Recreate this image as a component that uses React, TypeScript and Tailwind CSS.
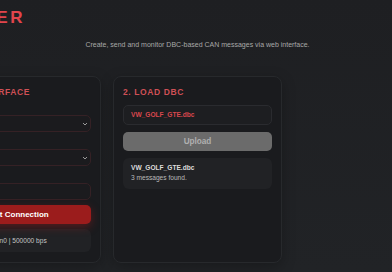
import React from "react";

function Chevron() {
  return (
    <svg width="6" height="4" viewBox="0 0 6 4" className="mr-[1px]">
      <path d="M1 1 L3 3 L5 1" fill="none" stroke="#9a9a9a" strokeWidth="1" />
    </svg>
  );
}

function Field({ children }: { children?: React.ReactNode }) {
  return (
    <div className="mt-[3px]">
      <div className="h-[10px] mb-[4px]" />
      <div className="h-[17px] rounded-[5px] border border-[#352125] bg-[#1b1b1e] flex items-center justify-end pr-[1px]">
        {children}
      </div>
    </div>
  );
}

export default function App() {
  return (
    <div className="w-[392px] h-[272px] overflow-hidden bg-gradient-to-b from-[#1e1f22] to-[#212326] font-['Liberation_Sans',Arial,sans-serif]">
      <div className="pt-[8px] h-[28px]">
        <div className="flex justify-end w-[25px] h-[20px]">
          <h1 className="shrink-0 whitespace-nowrap text-[17px] leading-[20px] font-bold tracking-[2.5px] text-[#e2454c]">
            DBC CAN SENDER
          </h1>
        </div>
      </div>
      <p className="mt-[12px] h-[10px] text-center pl-[3px] text-[7px] leading-[10px] text-[#a8a8a8]">
        Create, send and monitor DBC-based CAN messages via web interface.
      </p>
      <div className="mt-[26px] ml-[-68px] flex gap-[12px]">
        <div className="w-[169px] h-[187px] shrink-0 rounded-[8px] border border-[#27292c] bg-[#1a1b1e] p-[9px] shadow-[0_4px_14px_rgba(0,0,0,0.25)]">
          <h2 className="h-[12px] leading-[12px] text-[8.5px] font-bold tracking-[0.6px] text-[#cf5056] whitespace-nowrap">
            1. CAN INTERFACE
          </h2>
          <Field>
            <Chevron />
          </Field>
          <Field>
            <Chevron />
          </Field>
          <Field />
          <button className="mt-[5px] w-full h-[19px] rounded-[5px] bg-[#9b1c1c] text-white text-[8px] font-bold leading-[19px] shadow-[0_3px_10px_rgba(200,30,30,0.35)]">
            Start Connection
          </button>
          <div className="mt-[5px] h-[23px] rounded-[6px] bg-[#212225] flex items-center pl-[6px] text-[6.6px] text-[#c4c4c4] whitespace-nowrap">
            <span className="w-[5px] h-[5px] rounded-full bg-[#3a3a3a] mr-[4px]" />
            Connected: can0 | 500000 bps
          </div>
        </div>
        <div className="w-[169px] h-[187px] shrink-0 rounded-[8px] border border-[#27292c] bg-[#1a1b1e] p-[9px] shadow-[0_4px_14px_rgba(0,0,0,0.25)]">
          <h2 className="h-[12px] leading-[12px] text-[8.5px] font-bold tracking-[0.6px] text-[#cf5056] whitespace-nowrap">
            2. LOAD DBC
          </h2>
          <div className="mt-[7px] h-[20px] rounded-[5px] border border-[#2a2b2f] bg-[#1d1e21] flex items-center pl-[7px] text-[6.6px] font-bold text-[#d8474d]">
            VW_GOLF_GTE.dbc
          </div>
          <button className="mt-[7px] w-full h-[19px] rounded-[5px] bg-[#6b6b6b] text-[#b0b0b0] text-[8.2px] font-bold leading-[19px]">
            Upload
          </button>
          <div className="mt-[7px] h-[31px] rounded-[6px] bg-[#212225] px-[8px] pt-[5px]">
            <div className="h-[10px] leading-[10px] text-[6.6px] font-bold text-[#dcdcdc]">VW_GOLF_GTE.dbc</div>
            <div className="h-[10px] leading-[10px] text-[6.6px] text-[#bababa]">3 messages found.</div>
          </div>
        </div>
      </div>
    </div>
  );
}
